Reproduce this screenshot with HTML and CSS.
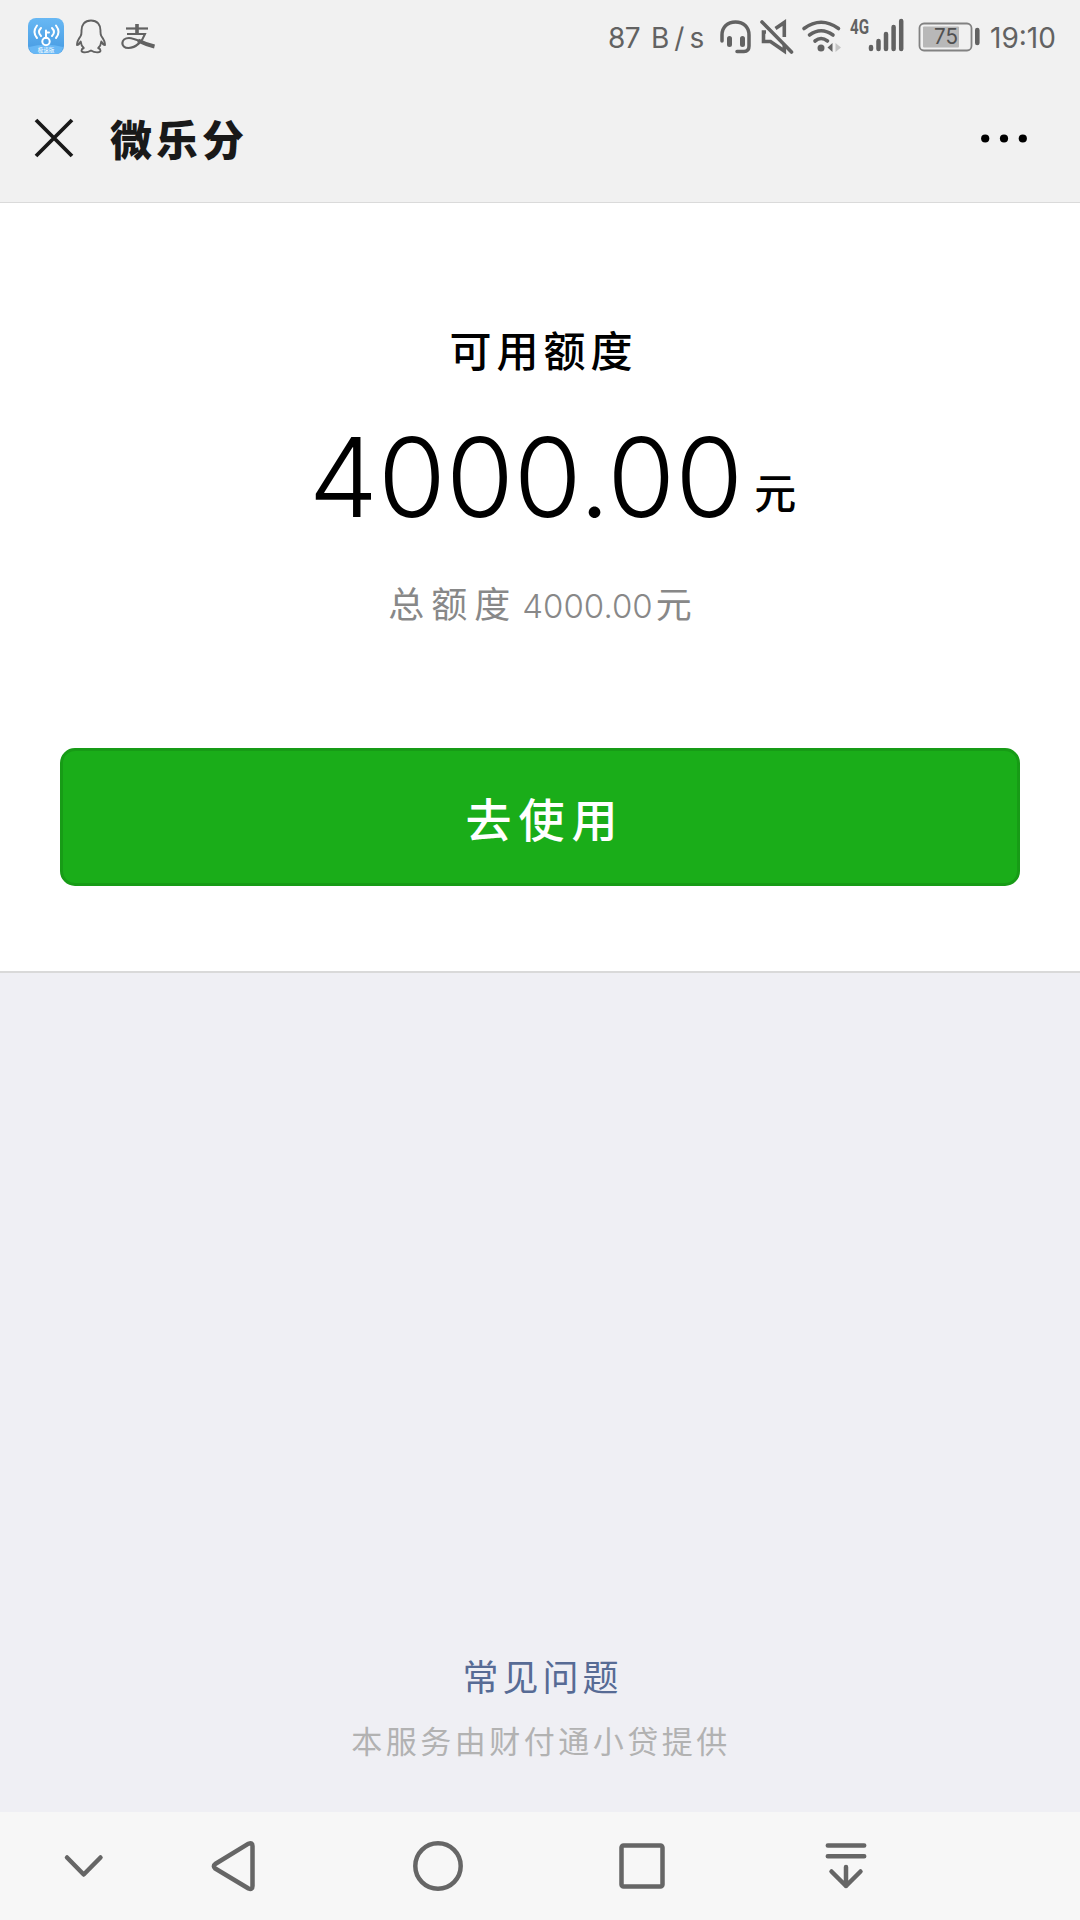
FILE: index.html
```html
<!DOCTYPE html>
<html lang="zh-CN">
<head>
<meta charset="UTF-8">
<title>微乐分</title>
<link rel="stylesheet" href="styles.css">
</head>
<body>
<div class="screen">
  <header class="top">
    <div class="status">
      <div class="status-left">
        <svg class="app" width="36" height="36" viewBox="0 0 36 36">
          <defs><linearGradient id="sky" x1="0" y1="0" x2="0" y2="1"><stop offset="0" stop-color="#68b8f4"/><stop offset="1" stop-color="#469ae2"/></linearGradient></defs>
          <rect width="36" height="36" rx="8" fill="url(#sky)"/>
          <path d="M1 29Q18 24 35 29Q34 36 28 36H8Q2 36 1 29Z" fill="#67b7f5"/>
          <g fill="none" stroke="#fff" stroke-width="2" stroke-linecap="round"><circle cx="18" cy="23.500" r="3.700"/><path d="M18 20V12.500M18 14.500h3M13 10q-4 4 0 8M9 7.500q-5 6.500 0 12.500M24 10q4 4 0 8M28 7.500q5 6.500 0 12.500"/></g>
          <text class="app-label" x="18" y="34" text-anchor="middle">极速版</text>
        </svg>
        <svg class="qq" width="30" height="35" viewBox="0 0 30 35"><path d="M15 1.500C8.500 1.500 5.500 6 5.500 11.500C5.500 14 5.800 15 4.500 17.200C2 20.500 1 23.500 1 26C2.500 26 4 24 4.700 22.500C5 25.500 6 27.500 7.800 29C5 30 4.500 33.300 8 33.300C11 33.500 13.500 32.500 15 31.500C16.500 32.500 19 33.500 22 33.300C25.500 33.300 25 30 22.200 29C24 27.500 25 25.500 25.300 22.500C26 24 27.500 26 29 26C29 23.500 28 20.500 25.500 17.200C24.200 15 24.500 14 24.500 11.500C24.500 6 21.500 1.500 15 1.500Z" fill="none" stroke="#626262" stroke-width="1.900" stroke-linejoin="round"/></svg>
        <svg class="pay" width="34" height="26" viewBox="0 0 34 26"><g fill="none" stroke="#626262"><path d="M5 4.500H27" stroke-width="2.200"/><path d="M16 0V10" stroke-width="3.600"/><path d="M6 10H24C21.500 17 15 24 7.500 24C-1 24 -.500 14 8 14C15 14 22 20 33 22.500" stroke-width="2.200"/><path d="M17 16.500Q25 20.500 33.500 22.500" stroke-width="4"/></g></svg>
      </div>
      <div class="status-right">
        <span class="speed"><span class="rate">87</span><span class="rate-unit">B/s</span></span>
        <svg class="head" width="31" height="34" viewBox="0 0 31 34"><g fill="none" stroke="#626262" stroke-width="3.500" stroke-linecap="round"><path d="M2 21V15C2 7 7.500 2 15.500 2S29 7 29 15V26C29 30 27 31.500 24 31.500H17"/><path d="M9.500 18.500v6M22.500 18.500v6" stroke-width="5"/></g></svg>
        <svg class="mute" width="33" height="34" viewBox="0 0 33 34"><g fill="none" stroke="#626262" stroke-width="3.600"><path d="M15.500 8.500L24.300 2.500V17M6 12H3.500V21.500H10.500L24.300 31V25"/><path d="M2 2L31.500 32" stroke-linecap="round"/></g></svg>
        <svg class="wifi" width="41" height="34" viewBox="0 0 41 34"><g fill="none" stroke="#626262" stroke-width="3.600" stroke-linecap="round"><path d="M2 8.500Q19 -4 36.500 8.500M7.500 15Q19 6.500 31 15M13 21Q19 16 25.500 21"/></g><circle cx="19" cy="28" r="3.500" fill="#626262"/><path d="M30.500 23V32L25.500 27.500Z" fill="#626262"/><path d="M33.500 23V32L39 27.500Z" fill="#c4c4c4"/></svg>
        <svg class="signal" width="55" height="34" viewBox="0 0 55 34"><text class="net" x="0" y="14.500" textLength="19" lengthAdjust="spacingAndGlyphs">4G</text><g stroke="#626262" stroke-width="4.500" stroke-linecap="round"><path d="M21 28v2M28.500 22v8M36 15v15M43.600 8v22M51.200 2v28"/></g></svg>
        <svg class="battery" width="63" height="30" viewBox="0 0 63 30"><rect x="1.500" y="1.500" width="52" height="27" rx="4.500" fill="none" stroke="#828282" stroke-width="1.800"/><rect x="5" y="4.500" width="36" height="21" rx="1" fill="#b8b8b8"/><text class="charge" x="16" y="22.300" textLength="24" lengthAdjust="spacingAndGlyphs">75</text><path d="M59.300 8v13" stroke="#626262" stroke-width="4.600" stroke-linecap="round"/></svg>
        <span class="clock">19:10</span>
      </div>
    </div>
    <div class="titlebar">
      <svg class="close" width="38" height="38" viewBox="0 0 38 38"><path d="M1 1L37 37M37 1L1 37" stroke="#191919" stroke-width="3.800"/></svg>
      <h1 class="title">微乐分</h1>
      <svg width="46" height="9" viewBox="0 0 46 9"><circle cx="4.200" cy="4.500" r="4.100"/><circle cx="23" cy="4.500" r="4.100"/><circle cx="41.800" cy="4.500" r="4.100"/></svg>
    </div>
  </header>
  <section class="card">
    <div class="label">可用额度</div>
    <div class="amount"><span class="number">4000.00</span><span class="unit">元</span></div>
    <div class="total"><span class="total-label">总额度</span><span class="total-number">4000.00</span><span>元</span></div>
    <button class="use">去使用</button>
  </section>
  <footer class="foot">
    <a class="faq">常见问题</a>
    <div class="provider">本服务由财付通小贷提供</div>
  </footer>
  <nav class="nav">
    <svg width="204" height="108" viewBox="0 0 204 108"><path d="M67 45.500L83.700 62.500L100.500 45.500"/></svg>
    <svg width="204" height="108" viewBox="0 0 204 108"><path d="M11.200 52L44.500 31.700Q48.500 30 48.500 34V74Q48.500 78 44.500 76.500L11.200 56.500Q8.500 54 11.200 52Z"/></svg>
    <svg width="204" height="108" viewBox="0 0 204 108"><circle cx="30" cy="54" r="22.700"/></svg>
    <svg width="204" height="108" viewBox="0 0 204 108"><rect x="9.500" y="33.500" width="41" height="41" rx="2"/></svg>
    <svg width="264" height="108" viewBox="0 0 264 108"><path d="M11.800 33.500H48.200M11.800 44.300H48.200M30 55V74M15.500 59.500L30 74L44.500 59.500"/></svg>
  </nav>
</div>
</body>
</html>
```
FILE: styles.css
```css
* { box-sizing: border-box; }
body { margin: 0; background: #efeff4; font-family: "Noto Sans CJK SC", sans-serif; }
svg { display: block; flex: none; overflow: visible; }
.screen { width: 1080px; height: 1920px; display: flex; flex-direction: column; overflow: hidden; }
.top { height: 203px; background: #f1f1f1; border-bottom: 1px solid #dadada; flex: none; }
.status { height: 75px; display: flex; justify-content: space-between; color: #626262; font-family: Inter, sans-serif; }
.status-left { display: flex; padding: 18px 0 0 28px; }
.status-right { display: flex; padding: 19px 1px 0 0; }
.app-label { font: 5.500px "Noto Sans CJK SC", sans-serif; fill: #fff; }
.qq { margin: 1px 0 0 12px; }
.pay { margin: 6px 0 0 15px; }
.speed, .clock { font-size: 28px; font-weight: 400; line-height: 38px; white-space: nowrap; }
.speed { width: 112px; display: flex; gap: 9px; }
.rate { width: 34px; letter-spacing: -0.500px; }
.rate-unit { letter-spacing: 5px; }
.clock { width: 89px; margin-left: 9px; letter-spacing: 0; }
.head { margin-top: 1px; }
.mute { margin: 1px 0 0 9px; }
.wifi { margin: 1px 0 0 9px; }
.signal { margin-left: 7px; }
.battery { margin: 3px 0 0 13px; }
.net { font: bold 20px Roboto, sans-serif; fill: #626262; }
.charge { font: 21px Inter, sans-serif; fill: #505050; }
.titlebar { height: 127px; display: flex; align-items: center; padding: 0 53px 0 35px; }
.close { margin-bottom: 2px; }
.title { flex: 1; margin: 0 0 2px 37px; font-size: 42px; font-weight: 900; line-height: 60px; letter-spacing: 4px; color: #191919; }
.card { height: 770px; flex: none; background: #fff; border-bottom: 2px solid #d9d9d9; padding: 116px 60px 0; display: flex; flex-direction: column; align-items: center; color: #000; }
.label { font-size: 42px; font-weight: 500; line-height: 60px; letter-spacing: 5px; padding-left: 7px; }
.amount { display: flex; align-items: baseline; height: 150px; line-height: 150px; margin-top: 23px; padding-left: 25px; }
.number { font-family: Inter, sans-serif; font-size: 110px; font-weight: 350; letter-spacing: 0; }
.unit { font-size: 42px; font-weight: 500; line-height: 60px; margin: 0 0 9px 11px; transform: translateY(-8px); }
.total { display: flex; align-items: baseline; height: 50px; line-height: 50px; margin-top: 25px; color: #888; font-size: 36px; }
.total-label { letter-spacing: 7px; }
.total-number { font-family: Inter, sans-serif; font-size: 33px; font-weight: 350; margin: 0 3px 0 5px; }
.use { width: 960px; height: 138px; margin: 121px 0 0; padding: 0 0 0 10px; border: 3px solid #179b16; border-radius: 15px; background: #1aad19; color: #fff; font: 500 46px "Noto Sans CJK SC", sans-serif; letter-spacing: 7px; }
.foot { flex: 1; display: flex; flex-direction: column; justify-content: flex-end; align-items: center; padding-bottom: 48px; }
.faq { color: #576b95; font-size: 36px; line-height: 56px; letter-spacing: 4px; margin-bottom: 13px; padding-left: 5px; }
.provider { color: #b2b2b2; font-size: 31px; line-height: 48px; letter-spacing: 3.500px; padding-left: 2px; }
.nav { height: 108px; flex: none; display: flex; background: #f7f7f7; }
.nav svg { fill: none; stroke: #666; stroke-width: 4.500; stroke-linecap: round; stroke-linejoin: round; }
```
